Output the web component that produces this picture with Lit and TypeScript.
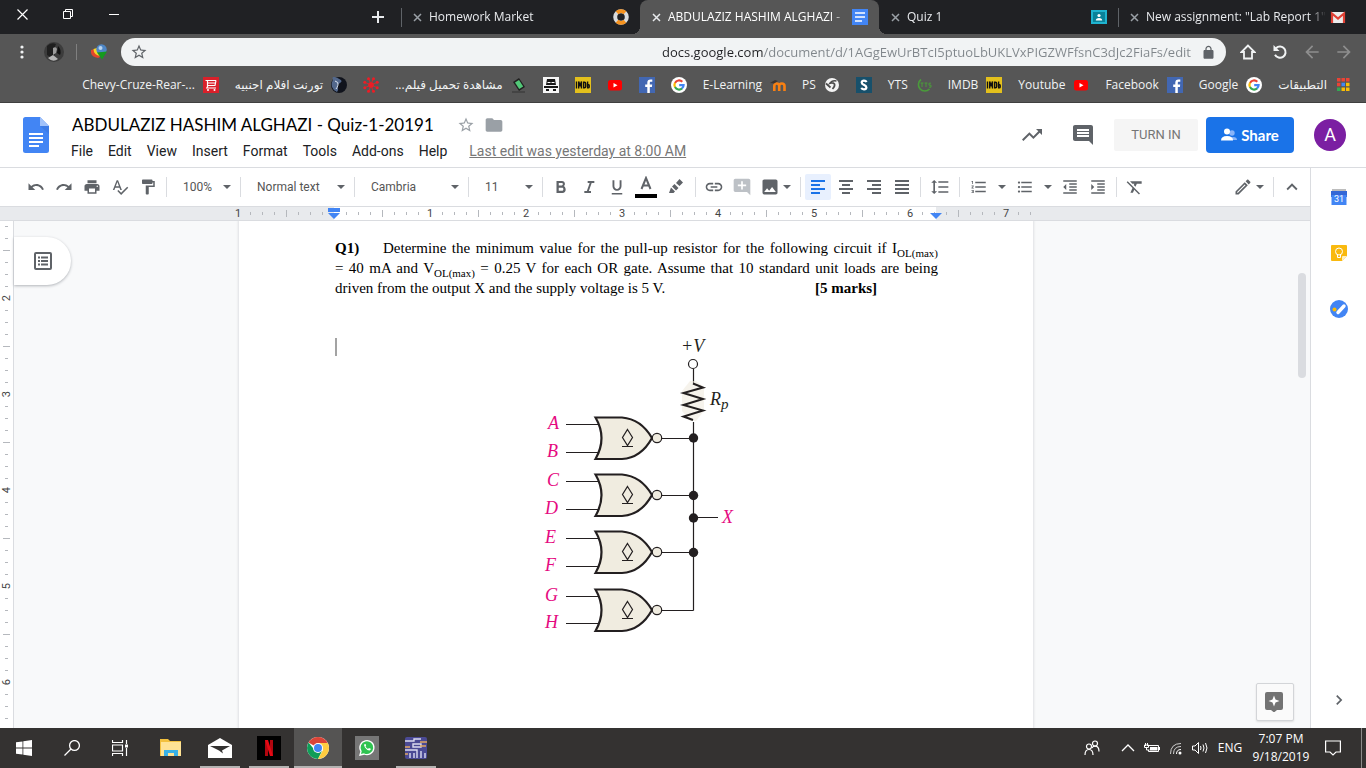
import { LitElement, html, svg, css, nothing } from "lit";
import { customElement, property } from "lit/decorators.js";
import { classMap } from "lit/directives/class-map.js";

const base = css`
  :host, * { box-sizing: border-box; }
  button, select, input { font: inherit; color: inherit; border: 0; background: none; padding: 0; margin: 0; outline: 0; }
  button { display: flex; align-items: center; justify-content: center; }
  a { color: inherit; text-decoration: none; }
  svg { display: block; flex: none; }
`;

const glyph = (d: string, size = 18) =>
  html`<svg width=${size} height=${size} viewBox="0 0 24 24" fill="currentColor" aria-hidden="true"><path d=${d} /></svg>`;
const art = (body: unknown, size = 16, box = 16) =>
  html`<svg width=${size} height=${size} viewBox="0 0 ${box} ${box}" fill="none" aria-hidden="true">${body}</svg>`;

const P = {
  undo: "M12.5 8c-2.65 0-5.05.99-6.9 2.6L2 7v9h9l-3.62-3.62c1.39-1.16 3.16-1.88 5.12-1.88 3.54 0 6.55 2.31 7.6 5.5l2.37-.78C21.08 11.03 17.15 8 12.5 8z",
  redo: "M18.4 10.6C16.55 8.99 14.15 8 11.5 8c-4.65 0-8.58 3.03-9.96 7.22L3.9 16c1.05-3.19 4.05-5.5 7.6-5.5 1.95 0 3.73.72 5.12 1.88L13 16h9V7l-3.6 3.6z",
  print: "M19 8H5c-1.66 0-3 1.34-3 3v6h4v4h12v-4h4v-6c0-1.66-1.34-3-3-3zm-3 11H8v-5h8v5zm3-7c-.55 0-1-.45-1-1s.45-1 1-1 1 .45 1 1-.45 1-1 1zm-1-9H6v4h12V3z",
  spell: "M12.45 16h2.09L9.43 3H7.57L2.46 16h2.09l1.12-3h5.64l1.14 3zm-6.02-5L8.5 5.48 10.57 11H6.43zm15.16.59l-8.09 8.09L9.83 16l-1.41 1.41 5.09 5.09L23 13l-1.41-1.41z",
  paint: "M18 4V3c0-.55-.45-1-1-1H5c-.55 0-1 .45-1 1v4c0 .55.45 1 1 1h12c.55 0 1-.45 1-1V6h1v4H9v11c0 .55.45 1 1 1h2c.55 0 1-.45 1-1v-9h8V4h-3z",
  bold: "M15.6 10.79c.97-.67 1.65-1.77 1.65-2.79 0-2.26-1.75-4-4-4H6v16h8.04c2.59 0 4.21-2 4.21-4.3 0-1.9-1.06-4.2-2.65-4.91zM9 6.5h4c.83 0 1.5.67 1.5 1.5s-.67 2-1.5 2H9V6.5zm4.5 10.5H9v-4h4.5c1.1 0 1.7.9 1.7 2s-.8 2-1.7 2z",
  italic: "M10 3v3h3l-4.2 12H5v3h10v-3h-3.2L16 6h4V3z",
  underline: "M12 17c3.31 0 6-2.69 6-6V3h-2.5v8c0 1.93-1.57 3.5-3.5 3.5S8.5 12.93 8.5 11V3H6v8c0 3.31 2.69 6 6 6zm-7 3v2h14v-2H5z",
  link: "M3.9 12c0-1.71 1.39-3.1 3.1-3.1h4V7H7c-2.76 0-5 2.24-5 5s2.24 5 5 5h4v-1.9H7c-1.71 0-3.1-1.39-3.1-3.1zM8 13h8v-2H8v2zm9-6h-4v1.9h4c1.71 0 3.1 1.39 3.1 3.1s-1.39 3.1-3.1 3.1h-4V17h4c2.76 0 5-2.24 5-5s-2.24-5-5-5z",
  addComment: "M21.99 4c0-1.1-.89-2-1.99-2H4c-1.1 0-2 .9-2 2v12c0 1.1.9 2 2 2h14l4 4-.01-18zM17 11h-4v4h-2v-4H7V9h4V5h2v4h4v2z",
  image: "M21 19V5c0-1.1-.9-2-2-2H5c-1.1 0-2 .9-2 2v14c0 1.1.9 2 2 2h14c1.1 0 2-.9 2-2zM8.5 13.5l2.5 3.01L14.5 12l4.5 6H5l3.5-4.5z",
  spacing: "M6 7h2.5L5 3.5 1.5 7H4v10H1.5L5 20.5 8.5 17H6V7zm4-2v2h12V5H10zm0 14h12v-2H10v2zm0-6h12v-2H10v2z",
  numbered: "M2 17h2v.5H3v1h1v.5H2v1h3v-4H2v1zm1-9h1V4H2v1h1v3zm-1 3h1.8L2 13.1v.9h3v-1H3.2L5 10.9V10H2v1zm5-6v2h14V5H7zm0 14h14v-2H7v2zm0-6h14v-2H7v2z",
  bulleted: "M4 10.5c-.83 0-1.5.67-1.5 1.5s.67 1.5 1.5 1.5 1.5-.67 1.5-1.5-.67-1.5-1.5-1.5zm0-6c-.83 0-1.5.67-1.5 1.5S3.17 7.5 4 7.5 5.5 6.83 5.5 6 4.83 4.5 4 4.5zm0 12c-.83 0-1.5.68-1.5 1.5s.68 1.5 1.5 1.5 1.5-.68 1.5-1.5-.67-1.5-1.5-1.5zM7 19h14v-2H7v2zm0-6h14v-2H7v2zm0-8v2h14V5H7z",
  outdent: "M11 17h10v-2H11v2zm-8-5l4 4V8l-4 4zm0 9h18v-2H3v2zM3 3v2h18V3H3zm8 6h10V7H11v2zm0 4h10v-2H11v2z",
  indent: "M3 21h18v-2H3v2zM3 8v8l4-4-4-4zm8 9h10v-2H11v2zM3 3v2h18V3H3zm8 6h10V7H11v2zm0 4h10v-2H11v2z",
  clear: "M3.27 5L2 6.27l6.97 6.97L6.5 19h3l1.57-3.66L16.73 21 18 19.73 3.55 5.27 3.27 5zM6 5v.18L8.82 8h2.4l-.72 1.68 2.1 2.1L14.21 8H20V5H6z",
  pencil: "M14.06 9.02l.92.92L5.92 19H5v-.92l9.06-9.06M17.66 3c-.25 0-.51.1-.7.29l-1.83 1.83 3.75 3.75 1.83-1.83c.39-.39.39-1.02 0-1.41l-2.34-2.34c-.2-.2-.45-.29-.71-.29zm-3.6 3.19L3 17.25V21h3.75L17.81 9.94l-3.75-3.75z",
  up: "M12 8l-6 6 1.41 1.41L12 10.83l4.59 4.58L18 14z",
  right: "M10 6L8.59 7.41 13.17 12l-4.58 4.59L10 18l6-6z",
  trend: "M16 6l2.29 2.29-4.88 4.88-4-4L2 16.59 3.41 18l6-6 4 4 6.3-6.29L22 12V6z",
  comment: "M21.99 4c0-1.1-.89-2-1.99-2H4c-1.1 0-2 .9-2 2v12c0 1.1.9 2 2 2h14l4 4-.01-18zM18 14H6v-2h12v2zm0-3H6V9h12v2zm0-3H6V6h12v2z",
  star: "M22 9.24l-7.19-.62L12 2 9.19 8.63 2 9.24l5.46 4.73L5.82 21 12 17.27 18.18 21l-1.63-7.03L22 9.24zM12 15.4l-3.76 2.27 1-4.28-3.32-2.88 4.38-.38L12 6.1l1.71 4.04 4.38.38-3.32 2.88 1 4.28L12 15.4z",
  folder: "M10 4H4c-1.1 0-1.99.9-1.99 2L2 18c0 1.1.9 2 2 2h16c1.1 0 2-.9 2-2V8c0-1.1-.9-2-2-2h-8l-2-2z",
  lock: "M18 8h-1V6c0-2.76-2.24-5-5-5S7 3.24 7 6v2H6c-1.1 0-2 .9-2 2v10c0 1.1.9 2 2 2h12c1.1 0 2-.9 2-2V10c0-1.1-.9-2-2-2zM9 8V6c0-1.66 1.34-3 3-3s3 1.34 3 3v2H9z",
  back: "M20 11H7.83l5.59-5.59L12 4l-8 8 8 8 1.41-1.41L7.83 13H20v-2z",
  forward: "M12 4l-1.41 1.41L16.17 11H4v2h12.17l-5.58 5.59L12 20l8-8z",
};

const googleG = svg`<circle cx="8" cy="8" r="8" fill="#fff"/><g stroke-width="2.2"><path d="M11.3 4.8A4.6 4.6 0 0 0 4 5.9" stroke="#ea4335"/><path d="M4 5.8a4.6 4.6 0 0 0 0 4.4" stroke="#fbbc05"/><path d="M4 10.1a4.6 4.6 0 0 0 7.1 1.3" stroke="#34a853"/><path d="M8.2 8.1h4.400a4.500 4.500 0 0 1-1.600 3.400" stroke="#4285f4"/></g>`;
const fb = svg`<path d="M0 0h16v16H0z" fill="#4267b2"/><path d="M10.800 16V9.900h2.100l.3-2.400h-2.400V6c0-.7.2-1.200 1.200-1.200h1.300V2.600a16 16 0 0 0-1.900-.1c-1.900 0-3.100 1.100-3.100 3.200v1.800H6.200v2.400h2.100V16z" fill="#fff"/>`;
const youtube = svg`<rect x="1" y="3" width="14" height="10.500" rx="2.500" fill="#f00"/><path d="M6.500 6v4.500l4-2.250z" fill="#fff"/>`;
const imdb = svg`<path d="M0 0h16v16H0z" fill="#e3c01c"/><g stroke="#111" stroke-width="1.400"><path d="M1.500 4.500v7M3.700 11.500v-7l1.400 4 1.400-4v7M8.700 5.200v5.600h.8q1.200 0 1.200-1.200V6.400q0-1.200-1.200-1.200zM12.600 4.500v6.400h.6q1 0 1-1V8.500q0-1-1-1"/></g>`;

const marks: Record<string, unknown> = {
  google: googleG,
  facebook: fb,
  youtube,
  imdb,
  apps: svg`<g><path d="M2 1h3.500v3.500H2zM6.500 1H10v3.500H6.500zM11 1h3.500v3.500H11zM2 5.700h3.500v3.500H2z" fill="#ea4335"/><path d="M6.500 5.700H10v3.500H6.500z" fill="#4285f4"/><path d="M11 5.700h3.500v3.500H11zM6.500 10.500H10V14H6.500zM11 10.500h3.500V14H11z" fill="#fbbc05"/><path d="M2 10.500h3.500V14H2z" fill="#34a853"/></g>`,
  yts: svg`<path d="M5 2.500A6.400 6.400 0 1 0 13.500 12" stroke="#4a9b3b" stroke-width="1.600"/><path d="M4.500 6h3M6 6v4M8.500 6h3M10 6v4M15 6.200h-2v2h2v2h-2" stroke="#4a9b3b"/>`,
  s: svg`<path d="M0 0h16v16H0z" fill="#17506b"/><path d="M10.500 5.200Q10 3.700 8 3.700 5.700 3.700 5.700 5.600q0 1.500 2.300 2.300t2.400 2.500Q10.300 12.400 8 12.400 5.800 12.400 5.400 10.800" stroke="#fff" stroke-width="2.200"/>`,
  ps: svg`<circle cx="8" cy="8" r="7" fill="#f4f4f4"/><path d="M12.500 4Q8 3 6 6.300q3-1 4.500.7.800 2-2 5M2 6.500l4.500 4" stroke="#4e4e4e" stroke-width="1.700"/>`,
  moodle: svg`<path d="M4.300 14V9q0-2.500 2.400-2.500T9.200 9v5M9.200 14V9q0-2.500 2.600-2.500T14.500 9v5" stroke="#f98012" stroke-width="2.600"/><path d="M0 6l5-3 3 1-4 2.500z" fill="#3a3532"/>`,
  mask: svg`<path d="M0 0h16v16H0z" fill="#f5f5f5"/><path d="M4 2h8l1 6H3zM1 9h14v2H1zM3 12h3v2H3zM10 12h3v2h-3z" fill="#171717"/><path d="M4.500 5.500h3M8.500 5.500h3" stroke="#fff"/>`,
  film: svg`<path d="M2 5l6-4 6 9-6 4z" fill="#202020"/><path d="M4 5.500l4-2.500 4.200 6.500-4 2.500z" fill="#52c878"/><path d="M1 15h13" stroke="#333"/>`,
  burst: svg`<g fill="#ee1c25"><circle cx="8" cy="8" r="2.800"/><circle cx="5.500" cy="1.700" r="1.500"/><circle cx="10.500" cy="1.700" r="1.500"/><circle cx="5.500" cy="14.300" r="1.500"/><circle cx="10.500" cy="14.300" r="1.500"/><circle cx="1.800" cy="5.300" r="1.500"/><circle cx="14.200" cy="5.300" r="1.500"/><circle cx="1.800" cy="10.700" r="1.500"/><circle cx="14.200" cy="10.700" r="1.500"/></g><path d="M6 2l4 12M10 2L6 14M2 5.500l12 5M14 5.500l-12 5" stroke="#ee1c25" stroke-width=".8"/>`,
  moon: svg`<circle cx="8" cy="8" r="8" fill="#10131c"/><path d="M2 3a8 8 0 0 0 4 12q2-3 .5-5T9 6 6.500 1 2 3z" fill="#53688c"/><path d="M4 4q4 1 3 4t-2 4" stroke="#dde6f4"/>`,
  cart: svg`<path d="M0 0h16v16H0z" fill="#d9202a"/><path d="M2.500 3.500H13M4.500 3.500v5h7.500l1-5M5 8.500L3.800 11H13M4.500 6H12" stroke="#fff" stroke-width="1.200"/><circle cx="5" cy="13" r="1" fill="#fff"/><circle cx="11.500" cy="13" r="1" fill="#fff"/>`,
  market: svg`<circle cx="8" cy="8" r="5.800" stroke="#d9dbdd" stroke-width="4"/><path d="M4 3.800a5.800 5.800 0 0 1 8 0M4 12.200a5.800 5.800 0 0 0 8 0" stroke="#f6921e" stroke-width="4"/>`,
  docs: svg`<path d="M0 0h16v16H0z" fill="#4285f4"/><path d="M3 4h10M3 8h10M3 12h7" stroke="#fff" stroke-width="1.700"/>`,
  classroom: svg`<path d="M0 1h16v14H0z" fill="#1fb3cf"/><path d="M2 3h12v10H2z" fill="#0a8299"/><circle cx="8" cy="6.500" r="1.600" fill="#fff"/><path d="M4.800 11.500q0-2.500 3.200-2.500t3.200 2.500z" fill="#fff"/>`,
  gmail: svg`<path d="M1 3h14v11H1z" fill="#ececec"/><path d="M2 14V4.500l6 5 6-5V14" stroke="#e04034" stroke-width="2.200"/>`,
};

@customElement("browser-frame")
class BrowserFrame extends LitElement {
  static styles = [base, css`
    :host { display: block; font: 12px/16px "Open Sans", "DejaVu Sans", sans-serif; color: #f1f3f4; background: #565656; border-bottom: 1px solid #3f3f3f; }
    .strip { display: flex; height: 34px; padding-right: 9px; background: #202124; }
    .win { width: 46px; height: 28px; color: #fff; }
    .win:first-child { width: 45px; }
    .grow { flex: 1; }
    .plus { width: 46px; }
    .tab { position: relative; display: flex; align-items: center; width: 239px; padding: 0 11px; color: #e8eaed; }
    .tab.split::before { content: ""; position: absolute; left: 0; top: 8px; height: 19px; width: 1px; background: #5f6368; }
    .tab.on { background: #565656; border-radius: 8px 8px 0 0; color: #fff; }
    .tab.on::before, .tab.on::after { content: ""; position: absolute; bottom: 0; width: 8px; height: 8px; }
    .tab.on::before { right: 100%; background: radial-gradient(circle at 0 0, #202124 8px, #565656 8px); }
    .tab.on::after { left: 100%; background: radial-gradient(circle at 100% 0, #202124 8px, #565656 8px); }
    .close { width: 10px; color: #9aa0a6; margin-right: 7px; }
    .on .close { color: #e8eaed; }
    .name { flex: 1; white-space: nowrap; margin-right: 4px; mask-image: linear-gradient(to left, transparent, #000 16px); }
    .nav { display: flex; align-items: center; height: 36px; padding: 0 6px; }
    .nav button { width: 32px; height: 32px; }
    .face { width: 32px; }
    .bar { width: 1px; height: 16px; margin: 0 6px; background: #808080; }
    .omni { display: flex; align-items: center; flex: 1; height: 28px; margin: 0 6px; padding: 0 10px; border-radius: 14px; background: #f1f3f4; color: #5f6368; gap: 10px; }
    .nav .omni button { width: 16px; }
    .omni input { flex: 1; min-width: 0; height: 28px; font-size: 13px; text-align: right; color: transparent; background: linear-gradient(to right, #202124 calc(100% - 428px), #80868b 0); background-clip: text; -webkit-background-clip: text; }
    .dim { color: #8e8e8e; }
    .marks { display: flex; justify-content: flex-end; align-items: center; gap: 16px; height: 32px; padding: 0 15px 3px 0; white-space: nowrap; }
    .marks a { display: flex; align-items: center; gap: 8px; }
  `];

  tabs = [
    { name: "Homework Market", icon: "market", split: true },
    { name: "ABDULAZIZ HASHIM ALGHAZI -", icon: "docs", on: true },
    { name: "Quiz 1", icon: "classroom" },
    { name: "New assignment: \"Lab Report 1\"", icon: "gmail", split: true },
  ] as { name: string; icon: string; on?: boolean; split?: boolean }[];

  bookmarks: [string, string][] = [
    ["Chevy-Cruze-Rear-...", "cart"], ["تورنت افلام اجنبيه", "moon"], ["", "burst"], ["مشاهدة تحميل فيلم...", "film"],
    ["", "mask"], ["", "imdb"], ["", "youtube"], ["", "facebook"], ["", "google"], ["E-Learning", "moodle"], ["PS", "ps"],
    ["", "s"], ["YTS", "yts"], ["IMDB", "imdb"], ["Youtube", "youtube"], ["Facebook", "facebook"], ["Google", "google"], ["التطبيقات", "apps"],
  ];

  render() {
    return html`
      <div class="strip">
        <button class="win" aria-label="Close">${art(svg`<path d="M.5.5l10 10M10.500.5l-10 10" stroke="currentColor" stroke-width="1.200"/>`, 11, 11)}</button>
        <button class="win" aria-label="Restore">${art(svg`<path d="M.5 2.500h7v7h-7zM2.500 2.500v-2h7v7h-2" stroke="currentColor"/>`, 10, 10)}</button>
        <button class="win" aria-label="Minimize">${art(svg`<path d="M0 5.500h10" stroke="currentColor"/>`, 10, 10)}</button>
        <span class="grow"></span>
        <button class="plus" aria-label="New tab">${art(svg`<path d="M6 0v12M0 6h12" stroke="#e8eaed" stroke-width="2"/>`, 12, 12)}</button>
        ${this.tabs.map((t) => html`
          <div class=${classMap({ tab: true, on: !!t.on, split: !!t.split })}>
            <button class="close" aria-label="Close tab">${art(svg`<path d="M1 1l7 7M8 1l-7 7" stroke="currentColor" stroke-width="1.500"/>`, 9, 9)}</button>
            <span class="name">${t.name}</span>${art(marks[t.icon])}
          </div>`)}
      </div>
      <div class="nav">
        <button aria-label="Menu">${art(svg`<g fill="#f1f3f4"><circle cx="8" cy="3" r="1.600"/><circle cx="8" cy="8" r="1.600"/><circle cx="8" cy="13" r="1.600"/></g>`)}</button>
        <button class="face" aria-label="Profile">${art(svg`<circle cx="10" cy="10" r="10" fill="#3c3c3c"/><path d="M3 4q4-4 9-2l-2 5 1 5-3 4-5-3z" fill="#1f1f1f"/><path d="M9 6q3-2 4 1l-1 4-3 2z" fill="#9b9b9b"/><path d="M4 16l5-3 5 4q-5 4-10-1z" fill="#b5b5b5"/><path d="M14 4q4 4 2 9l-3-2z" fill="#111"/>`, 20, 20)}</button>
        <span class="bar"></span>
        <button aria-label="Download manager">${art(svg`<path d="M0 6q-1 7 7 8l4-2q-7 0-7-7z" fill="#e2452c"/><path d="M2.500 5q0 6 7 7l2-2Q6 9 6 4z" fill="#f4d62a"/><circle cx="10.500" cy="5.500" r="5.200" fill="#4d86c6"/><circle cx="9.500" cy="4" r="2" fill="#b8d4ef"/><path d="M6 8.500l10-1-5 8z" fill="#159a1e"/>`)}</button>
        <div class="omni">
          <button aria-label="Bookmark this page">${glyph(P.star, 18)}</button>
          <input aria-label="Address" spellcheck="false" .value=${"docs.google.com/document/d/1AGgEwUrBTcI5ptuoLbUKLVxPIGZWFfsnC3dJc2FiaFs/edit"}>
          ${glyph(P.lock, 15)}
        </div>
        <button aria-label="Home">${art(svg`<path d="M8 1.500L1.500 8H4v6.500h8V8h2.500z" stroke="#f1f3f4" stroke-width="1.800"/>`)}</button>
        <button aria-label="Reload">${art(svg`<path d="M4 4.200A5.600 5.600 0 1 1 3 10.700" stroke="#f1f3f4" stroke-width="2"/><path d="M1.500 1v6h6z" fill="#f1f3f4"/>`)}</button>
        <button class="dim" aria-label="Back">${glyph(P.back, 20)}</button>
        <button class="dim" aria-label="Forward">${glyph(P.forward, 20)}</button>
      </div>
      <nav class="marks">
        ${this.bookmarks.map(([t, i]) => html`<a href="#" aria-label=${t || i}>${t ? html`<bdi>${t}</bdi>` : nothing}${art(marks[i])}</a>`)}
      </nav>`;
  }
}

const rows = (a: string) => html`<svg width="18" height="18" viewBox="0 0 18 18" stroke="currentColor" stroke-width="2" aria-hidden="true"><path d=${a} /></svg>`;
const arrow = html`<svg class="arrow" width="8" height="4" viewBox="0 0 8 4" fill="currentColor" aria-hidden="true"><path d="M0 0h8L4 4z"/></svg>`;

@customElement("docs-header")
class DocsHeader extends LitElement {
  static styles = [base, css`
    :host { display: flex; align-items: center; height: 65px; padding: 0 20px 0 23px; border-bottom: 1px solid #dadce0; background: #fff; font: 14px/20px Roboto, sans-serif; color: #202124; }
    .names { flex: 1; margin-left: 15px; padding-top: 6px; min-width: 0; }
    .title { display: flex; align-items: center; height: 26px; padding-left: 8px; color: #9aa0a6; }
    .title input { width: 380px; height: 26px; font: 17px/26px Lato, sans-serif; color: #000; }
    .title button { width: 28px; }
    .menu { display: flex; height: 26px; align-items: center; gap: 1px; white-space: nowrap; }
    .menu button { padding: 0 7px; height: 24px; }
    .menu a { margin-left: 14px; color: #777; text-decoration: underline; }
    .tool { width: 40px; height: 40px; color: #5f6368; margin-right: 11px; }
    .turn { width: 84px; height: 32px; margin: 0 8px 0 0; border-radius: 2px; background: #f5f5f5; color: #757575; font-size: 13px; }
    .share { width: 88px; height: 36px; gap: 4px; border-radius: 4px; background: #1a73e8; color: #fff; font: 700 15px/20px Lato, sans-serif; }
    .me { width: 32px; height: 32px; margin-left: 20px; border-radius: 50%; background: #7b1fa2; color: #fff; font-size: 18px; }
  `];
  render() {
    return html`
      <svg width="26" height="36" viewBox="0 0 26 36" aria-hidden="true"><path d="M2.500 0H17l9 9v24.500a2.500 2.500 0 0 1-2.500 2.500h-21A2.500 2.500 0 0 1 0 33.500v-31A2.500 2.500 0 0 1 2.500 0z" fill="#4285f4"/><path d="M17 0l9 9h-9z" fill="#a1c2fa"/><path d="M17 9h9v8z" fill="#3a75dc" opacity=".6"/><path d="M6 17h14M6 21h14M6 25h14M6 29h10" stroke="#fff" stroke-width="2"/></svg>
      <div class="names">
        <div class="title">
          <input aria-label="Document title" spellcheck="false" .value=${"ABDULAZIZ HASHIM ALGHAZI - Quiz-1-20191"}>
          <button aria-label="Star">${glyph(P.star, 18)}</button>
          <button aria-label="Move to folder">${glyph(P.folder, 20)}</button>
        </div>
        <div class="menu">
          ${["File", "Edit", "View", "Insert", "Format", "Tools", "Add-ons", "Help"].map((m) => html`<button>${m}</button>`)}
          <a href="#">Last edit was yesterday at 8:00 AM</a>
        </div>
      </div>
      <button class="tool" aria-label="Activity">${glyph(P.trend, 24)}</button>
      <button class="tool" aria-label="Comments">${glyph(P.comment, 24)}</button>
      <button class="turn">TURN IN</button>
      <button class="share">${art(svg`<circle cx="11" cy="6" r="2.700" fill="#8ab4f8"/><path d="M9 13q0-3 3-3 4 0 4 3z" fill="#8ab4f8"/><circle cx="6" cy="4.500" r="3" fill="#fff"/><path d="M0 13.500Q0 9 6 9t6 4.500z" fill="#fff"/>`)}Share</button>
      <button class="me" aria-label="Account">A</button>`;
  }
}

@customElement("docs-toolbar")
class DocsToolbar extends LitElement {
  static styles = [base, css`
    :host { display: flex; align-items: center; height: 39px; padding: 0 4px 0 22px; border-bottom: 1px solid #dadce0; background: #fff; font: 12px/16px Roboto, sans-serif; color: #5f6368; }
    button { width: 28px; height: 26px; }
    .sep { width: 1px; height: 20px; margin: 0 4px; background: #dadce0; }
    .pick { display: grid; align-items: center; width: 105px; }
    .pick > * { grid-area: 1 / 1; }
    .pick .arrow { justify-self: end; margin-right: 5px; }
    .pick.short { width: 65px; }
    select { appearance: none; width: 100%; height: 26px; padding-left: 12px; color: #555; }
    .wide { width: 30px; }
    .combo { width: 40px; justify-content: flex-start; padding-left: 4px; gap: 3px; }
    .list { width: 46px; padding-left: 6px; gap: 10px; }
    .on { background: #e8f0fe; color: #1a73e8; border-radius: 2px; width: 26px; margin: 0 1px 0 0; }
    .off { color: #bdc1c6; }
    .grow { flex: 1; }
  `];
  btn(label: string, d: string, cls = "", size = 18) { return html`<button class=${cls} aria-label=${label}>${glyph(d, size)}</button>`; }
  pick(label: string, value: string, short = false) {
    return html`<label class=${classMap({ pick: true, short })}><select aria-label=${label}><option>${value}</option></select>${arrow}</label>`;
  }
  render() {
    const sep = html`<span class="sep"></span>`;
    return html`
      ${this.btn("Undo", P.undo)}${this.btn("Redo", P.redo)}${this.btn("Print", P.print)}${this.btn("Spelling", P.spell)}${this.btn("Paint format", P.paint)}
      ${sep}${this.pick("Zoom", "100%", true)}${sep}${this.pick("Styles", "Normal text")}${sep}${this.pick("Font", "Cambria")}${sep}${this.pick("Font size", "11", true)}${sep}
      ${this.btn("Bold", P.bold)}${this.btn("Italic", P.italic, "", 16)}${this.btn("Underline", P.underline)}
      <button class="wide" aria-label="Text colour"><svg width="22" height="22" viewBox="0 0 22 22"><path d="M6.500 13L11 2l4.500 11M8 9.500h6" fill="none" stroke="currentColor" stroke-width="2"/><path d="M0 18h22v4H0z" fill="#000"/></svg></button>
      <button class="wide" aria-label="Highlight colour">${art(svg`<path d="M1 14l2-5.500 4 4L5.500 14zM4 7.500L6.500 5l4 4L8 11.500zM8 4l3.500-4L15 3.500 11.500 7z" fill="currentColor"/>`)}</button>
      ${sep}${this.btn("Insert link", P.link, "", 20)}${this.btn("Add comment", P.addComment, "off", 20)}
      <button class="combo" aria-label="Insert image">${glyph(P.image, 20)}${arrow}</button>${sep}
      <button class="on" aria-label="Align left" aria-pressed="true">${rows("M2 3h14M2 7h9M2 11h14M2 15h9")}</button>
      <button aria-label="Align centre">${rows("M2 3h14M5 7h8M2 11h14M5 15h8")}</button>
      <button aria-label="Align right">${rows("M2 3h14M7 7h9M2 11h14M7 15h9")}</button>
      <button aria-label="Justify">${rows("M2 3h14M2 7h14M2 11h14M2 15h14")}</button>
      ${sep}<button class="wide" aria-label="Line spacing">${glyph(P.spacing, 20)}</button>${sep}
      <button class="combo list" aria-label="Numbered list">${glyph(P.numbered, 18)}${arrow}</button>
      <button class="combo list" aria-label="Bulleted list">${glyph(P.bulleted, 18)}${arrow}</button>
      ${this.btn("Decrease indent", P.outdent)}${this.btn("Increase indent", P.indent)}${sep}${this.btn("Clear formatting", P.clear, "", 20)}
      <span class="grow"></span>
      <button class="combo" aria-label="Editing mode">${glyph(P.pencil, 20)}${arrow}</button>${sep}${this.btn("Hide menus", P.up, "", 22)}`;
  }
}

@customElement("doc-ruler")
class DocRuler extends LitElement {
  @property({ type: Boolean, reflect: true }) vertical = false;
  static styles = [base, css`
    :host { display: flex; font: 11px/12px Roboto, sans-serif; color: #444; overflow: hidden; }
    :host(:not([vertical])) { height: 14px; justify-content: center; padding: 0 52px 0 14px; background: #e8eaed; border-bottom: 1px solid #dadce0; }
    :host([vertical]) { width: 14px; background: #fff; border-right: 1px solid #dadce0; }
    .track { position: relative; display: flex; width: 794px; flex: none; background: linear-gradient(to right, transparent 95px, #fff 95px 697px, transparent 697px); }
    .ticks { display: flex; margin-left: -7px; flex: none; }
    :host([vertical]) .ticks { flex-direction: column; margin: -1px 0 0; }
    .cell { display: flex; flex: none; width: 12px; height: 13px; align-items: center; justify-content: center; }
    :host([vertical]) .cell { width: 13px; height: 12px; writing-mode: sideways-lr; }
    .tick { width: 1px; height: 3px; background: #b5b8bd; }
    .tick.half { height: 7px; }
    :host([vertical]) .tick { width: 3px; height: 1px; }
    :host([vertical]) .tick.half { width: 7px; }
    .mark { position: absolute; bottom: 1px; fill: #4285f4; }
    .start { left: 89px; }
    .end { left: 691px; bottom: 0; }
  `];
  cells(count: number, first: number, skipZero: boolean) {
    return Array.from({ length: count }, (_, i) => {
      const n = i + first;
      if (n % 8 === 0) return html`<span class="cell">${n === 0 && skipZero ? "" : Math.abs(n / 8)}</span>`;
      return html`<span class="cell"><i class=${classMap({ tick: true, half: n % 4 === 0 })}></i></span>`;
    });
  }
  render() {
    if (this.vertical) return html`<div class="ticks">${this.cells(44, 10, false)}</div>`;
    return html`<div class="track">
      <div class="ticks">${this.cells(67, -8, true)}</div>
      <svg class="mark start" width="12" height="11" viewBox="0 0 12 11"><path d="M0 0h12v4H0zM0 5h12L6 11z"/></svg>
      <svg class="mark end" width="12" height="7" viewBox="0 0 12 7"><path d="M0 0h12L6 6z"/></svg>
    </div>`;
  }
}

@customElement("circuit-figure")
class CircuitFigure extends LitElement {
  static styles = css`
    :host { display: block; }
    svg { display: block; }
    text { font: italic 18px "Liberation Serif", serif; fill: #231f20; }
    .in { fill: #e5097f; }
    .sub { font-size: 15px; }
    .wire { stroke: #231f20; stroke-width: 1.2; fill: none; }
  `;
  gates = [
    { y: 438, a: ["A", 548, 424.5], b: ["B", 547, 452.5] },
    { y: 495, a: ["C", 547, 481.5], b: ["D", 545, 509.5] },
    { y: 552, a: ["E", 545, 538.5], b: ["F", 545, 566.5] },
    { y: 610, a: ["G", 545, 596.5], b: ["H", 545, 623.5] },
  ] as { y: number; a: [string, number, number]; b: [string, number, number] }[];
  render() {
    const input = ([name, x, y]: [string, number, number]) =>
      svg`<text class="in" x=${x} y=${y + 4.5}>${name}</text><path class="wire" d="M566 ${y}h34"/>`;
    return html`<svg width="219" height="310" viewBox="527 330 219 310" role="img" aria-label="Four open-collector gates wired to a pull-up resistor">
      <path class="wire" d="M693.500 369v15M693.500 422v188.500M693 517.500h25"/>
      <circle class="wire" cx="693" cy="364" r="4.500"/>
      <path d="M690 381h6l8 6v24l-8 10h-6l-8-10v-20z" fill="#f0ebe0" opacity=".6"/>
      <path d="M693 383.500l10 4-19.500 5.500 19.500 6-19.500 6 19.500 5.500-19.500 6 9.500 3.500" fill="none" stroke="#231f20" stroke-width="2"/>
      ${this.gates.map((g) => svg`
        ${input(g.a)}${input(g.b)}
        <path class="wire" d="M660 ${g.y + 0.5}h33.500"/>
        <path d="M595.500 ${g.y - 20.5}H622Q641 ${g.y - 19} 652 ${g.y}Q641 ${g.y + 20} 622 ${g.y + 21}H595.500Q607.500 ${g.y} 595.500 ${g.y - 20.5}z" fill="#f0ece0" stroke="#231f20" stroke-width="2.200"/>
        <path class="wire" d="M627.500 ${g.y - 8.5}l5 8-5 8-5-8zM622 ${g.y + 8.5}h11"/>
        <circle cx="657" cy=${g.y} r="4.700" fill="#f0ece0" stroke="#231f20" stroke-width="1.200"/>`)}
      <g fill="#231f20"><circle cx="693.500" cy="438" r="4.700"/><circle cx="693.500" cy="495.500" r="4.700"/><circle cx="693.500" cy="518" r="4.700"/><circle cx="693.500" cy="552.500" r="4.700"/></g>
      <text x="681" y="352">+V</text><text x="710" y="405">R<tspan class="sub" dy="4">p</tspan></text>
      <text class="in" x="722" y="523">X</text>
    </svg>`;
  }
}

@customElement("doc-canvas")
class DocCanvas extends LitElement {
  static styles = [base, css`
    :host { display: flex; flex: 1; min-height: 0; position: relative; overflow: hidden; background: #f8f9fa; }
    .area { flex: 1; display: flex; justify-content: center; padding-right: 52px; }
    .page { width: 794px; flex: none; padding: 17px 95px 0 96px; background: #fff; box-shadow: 0 0 2px 1px #dfe1e4; font: 15px/20px "Liberation Serif", serif; color: #000; }
    .line { text-align: justify; text-align-last: justify; white-space: nowrap; }
    .first { display: flex; }
    .first b { flex: none; width: 48px; text-align-last: left; }
    .first span { flex: 1; }
    .last { text-align-last: left; white-space: pre; tab-size: 480px; }
    sub { font-size: 11px; line-height: 0; vertical-align: -4px; }
    .figure { display: flex; margin-top: 32px; }
    .caret { width: 2px; height: 18px; margin: 8px -2px 0 0; background: #a3a3a3; }
    circuit-figure { margin: 0 auto; }
    .outline { position: absolute; left: 14px; top: 16px; width: 57px; height: 48px; border-radius: 0 24px 24px 0; background: #fff; box-shadow: 0 1px 3px #b0b3b8; color: #5f6368; }
    .thumb { position: absolute; right: 4px; top: 52px; width: 8px; height: 105px; border-radius: 4px; background: #dadce0; }
    .explore { position: absolute; right: 16px; bottom: 7px; width: 38px; height: 38px; border: 1px solid #d3d5d8; border-radius: 2px; background: #fafafa; box-shadow: 0 1px 2px #ddd; }
  `];
  render() {
    return html`
      <doc-ruler vertical></doc-ruler>
      <div class="area"><article class="page">
        <div class="line first"><b>Q1)</b><span>Determine the minimum value for the pull-up resistor for the following circuit if I<sub>OL(max)</sub></span></div>
        <div class="line">= 40 mA and V<sub>OL(max)</sub> = 0.25 V for each OR gate. Assume that 10 standard unit loads are being</div>
        <div class="line last">driven from the output X and the supply voltage is 5 V.${"\t"}<b>[5 marks]</b></div>
        <div class="figure"><span class="caret"></span><circuit-figure></circuit-figure></div>
      </article></div>
      <button class="outline" aria-label="Show document outline">${art(svg`<rect x="1" y="1" width="16" height="16" rx="1" stroke="currentColor" stroke-width="2"/><path d="M4 5.500h2M4 9h2M4 12.500h2M7 5.500h7M7 9h7M7 12.500h7" stroke="currentColor" stroke-width="2"/>`, 18, 18)}</button>
      <span class="thumb"></span>
      <button class="explore" aria-label="Explore">${art(svg`<path d="M2 0h14q2 0 2 2v14q0 2-2 2h-4l-3 2.500L6 18H2q-2 0-2-2V2q0-2 2-2z" fill="#737373"/><path d="M9 3.500l1.500 4L14.500 9l-4 1.500L9 14.500l-1.500-4L3.500 9l4-1.500z" fill="#fff"/>`, 20, 20)}</button>`;
  }
}

@customElement("side-panel")
class SidePanel extends LitElement {
  static styles = [base, css`
    :host { display: flex; flex-direction: column; align-items: center; width: 56px; padding: 17px 0 16px; border-left: 1px solid #dadce0; background: #fff; gap: 32px; color: #5f6368; }
    button { width: 24px; height: 24px; }
    .toggle { margin-top: auto; }
    text { font: 9px Roboto, sans-serif; fill: #fff; }
  `];
  render() {
    return html`
      <button aria-label="Calendar">${art(svg`<path d="M1 0h14v3H1z" fill="#bdbdbd"/><path d="M0 2h16v6H0z" fill="#3367d6"/><path d="M.5 6h15v10H.5z" fill="#4285f4"/><text x="3" y="12.500">31</text>`)}</button>
      <button aria-label="Keep">${art(svg`<path d="M1 0h14q1 0 1 1v10l-5 5H1q-1 0-1-1V1q0-1 1-1z" fill="#f9b90e"/><path d="M16 11l-5 5v-4q0-1 1-1z" fill="#fff0c2"/><circle cx="8" cy="6.500" r="3.500" stroke="#fff"/><path d="M6.500 9v3.500h3V9" stroke="#fff"/>`)}</button>
      <button aria-label="Tasks">${art(svg`<circle cx="9" cy="9" r="9" fill="#4285f4"/><circle cx="4.500" cy="9.500" r="2" fill="#fbbc04"/><path d="M8 12.500l6-6.500" stroke="#fff" stroke-width="3.400" stroke-linecap="round"/>`, 18, 18)}</button>
      <button class="toggle" aria-label="Hide side panel">${glyph(P.right, 20)}</button>`;
  }
}

@customElement("task-bar")
class TaskBar extends LitElement {
  static styles = [base, css`
    :host { display: flex; align-items: stretch; height: 40px; background: #343231; color: #fff; font: 12px/18px "Open Sans", sans-serif; }
    .left, .apps, .tray { display: flex; }
    .apps { gap: 1px; margin: 0 auto 0 3px; }
    .left button, .apps button { width: 48px; position: relative; }
    .run::after { content: ""; position: absolute; left: 4px; right: 4px; bottom: 0; height: 2px; background: #b4b3b2; }
    .on { background: #555453; }
    .on::after { left: 0; right: 0; }
    .tray button { width: 24px; }
    .tray .people { width: 48px; }
    .tray .lang { width: 36px; }
    .tray .clock { width: 66px; flex-direction: column; }
    .tray .notes { width: 38px; margin-right: 9px; }
    .show { width: 5px; border-left: 1px solid #8c8b8a; }
  `];
  render() {
    return html`
      <div class="left">
        <button aria-label="Start">${art(svg`<path d="M0 2.300L6.500 1.400v6.200H0zM7.300 1.300L16 0v7.600H7.300zM0 8.400h6.500v6.200L0 13.700zM7.300 8.400H16V16l-8.700-1.300z" fill="#fff"/>`)}</button>
        <button aria-label="Search">${art(svg`<circle cx="10.500" cy="5.500" r="4.900" stroke="#fff" stroke-width="1.300"/><path d="M7 9L.5 15.500" stroke="#fff" stroke-width="1.300"/>`)}</button>
        <button aria-label="Task view">${art(svg`<path d="M.5 0v2.500h10V0M.5 16v-2.500h10V16M.5 5h10v6H.5zM14.500 0v4M14.500 8v8" stroke="#fff" stroke-width="1.200"/><path d="M13 4.500h3v3h-3z" fill="#fff"/>`)}</button>
      </div>
      <div class="apps">
        <button aria-label="Files">${art(svg`<path d="M0 2h8l2 2h11v15H0z" fill="#f3c13e"/><path d="M1 5h20v14H1z" fill="#ffe394"/><path d="M4 19v-6h14v6h-4v-3H8v3z" fill="#39b1e6"/>`, 22, 22)}</button>
        <button class="run" aria-label="Mail">${art(svg`<path d="M0 9l12-7 12 7v13H0z" fill="#fff"/><path d="M2 10h20l-8 4.500 1 3-4-3z" fill="#343231"/>`, 24, 24)}</button>
        <button class="run" aria-label="Netflix">${art(svg`<path d="M0 0h24v24H0z" fill="#000"/><path d="M8 4h3v16H8zM13 4h3v16h-3z" fill="#b1060f"/><path d="M8 4h3l5 16h-3z" fill="#e50914"/>`, 24, 24)}</button>
        <button class="run on" aria-label="Chrome">${art(svg`<circle cx="11" cy="11" r="11" fill="#fff"/><path d="M11 11L1.500 5.500a11 11 0 0 1 19 0z" fill="#db4437"/><path d="M11 11h-5L1.500 5.500A11 11 0 0 0 11 22l4-8z" fill="#0f9d58"/><path d="M11 6h9.800A11 11 0 0 1 11 22l5-9z" fill="#ffcd40"/><circle cx="11" cy="11" r="5" fill="#fff"/><circle cx="11" cy="11" r="4" fill="#4285f4"/>`, 22, 22)}</button>
        <button aria-label="WhatsApp">${art(svg`<path d="M0 0h24v24H0z" fill="#767676"/><path d="M5 19l1-3.600A7 7 0 1 1 9 18z" fill="#2fc351" stroke="#fff" stroke-width="1.300"/><path d="M9.500 8q-1 1 .5 3.500t4.500 3q1.500-.5 1.300-1.700l-1.900-.9-.9 1q-2-.8-2.500-2.600l.7-.8L10.500 8z" fill="#fff"/>`, 24, 24)}</button>
        <button class="run" aria-label="Circuit simulator">${art(svg`<rect width="22" height="22" rx="2" fill="#4b4a94"/><path d="M0 4h9V2h7M8 10h8V7H8zM0 13h12v8M5 21v-5M9 21v-5M16 21v-7M20 21v-5" stroke="#dcdcf0" stroke-width="1.400"/><path d="M15 5h7M15 9h6M0 10h5M0 17h3" stroke="#e2a860" stroke-width="1.400"/>`, 22, 22)}</button>
      </div>
      <div class="tray">
        <button class="people" aria-label="People">${art(svg`<circle cx="5" cy="6.500" r="2.500" stroke="#fff" stroke-width="1.200"/><path d="M1 15q0-5.500 4-5.500T9 15" stroke="#fff" stroke-width="1.200"/><circle cx="11" cy="3.500" r="2.500" stroke="#fff" stroke-width="1.200"/><path d="M8 8q1-1.800 3-1.800 4 0 4 5.300" stroke="#fff" stroke-width="1.200"/>`)}</button>
        <button aria-label="Hidden icons">${art(svg`<path d="M2 11l6-6 6 6" stroke="#fff" stroke-width="1.300"/>`)}</button>
        <button aria-label="Battery">${art(svg`<path d="M1.500 3v3M3.500 3v3M.5 5h4v2.500h-4zM2.500 7v3h3" stroke="#fff"/><path d="M5 5.500h9.500v6H4.500V10" stroke="#fff"/><path d="M6 7h7.500v3.500H6z" fill="#fff"/><path d="M15 7h1v3h-1z" fill="#fff"/>`)}</button>
        <button aria-label="Network">${art(svg`<circle cx="12" cy="13" r="1.500" fill="#fff"/><path d="M8.500 14q0-4.500 4.500-4.500" stroke="#fff"/><path d="M5.500 14q0-7.500 7.500-7.500M2.500 14q0-10.500 10.500-10.500" stroke="#d0d0d0"/>`)}</button>
        <button aria-label="Volume">${art(svg`<path d="M.5 6h2.500l3.500-3.500v11L3 10H.5z" stroke="#fff"/><path d="M8.500 6q1 2 0 4M11 4.500q2 3.500 0 7M13.500 3q3 5 0 10" stroke="#fff"/>`)}</button>
        <button class="lang">ENG</button>
        <button class="clock"><span>7:07 PM</span><span>9/18/2019</span></button>
        <button class="notes" aria-label="Notifications">${art(svg`<path d="M.6 1h14.800v11H11l-3 3-3-3H.6z" stroke="#fff" stroke-width="1.200"/>`)}</button>
        <span class="show"></span>
      </div>`;
  }
}

@customElement("app-root")
class AppRoot extends LitElement {
  static styles = css`
    :host { display: flex; flex-direction: column; height: 100vh; min-width: 1200px; overflow: hidden; background: #fff; }
    .work { display: flex; flex: 1; min-height: 0; }
    .editor { display: flex; flex-direction: column; flex: 1; min-width: 0; }
  `;
  render() {
    return html`
      <browser-frame></browser-frame>
      <docs-header></docs-header>
      <main class="work">
        <div class="editor"><docs-toolbar></docs-toolbar><doc-ruler></doc-ruler><doc-canvas></doc-canvas></div>
        <side-panel></side-panel>
      </main>
      <task-bar></task-bar>`;
  }
}
